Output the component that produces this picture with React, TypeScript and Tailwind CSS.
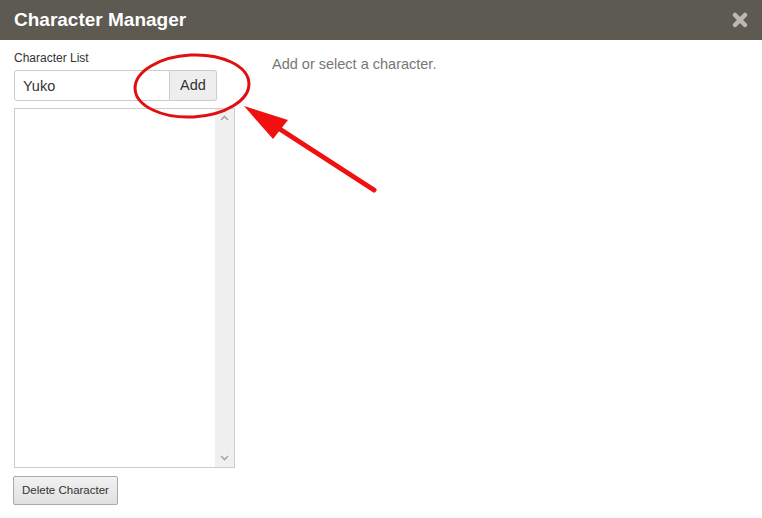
import React from "react";

const font = { fontFamily: '"Liberation Sans", Arial, sans-serif' };

const Annotation: React.FC = () => (
  <svg
    className="pointer-events-none absolute left-0 top-0"
    width="762"
    height="518"
    viewBox="0 0 762 518"
  >
    <ellipse
      cx="192"
      cy="86"
      rx="57"
      ry="31"
      fill="none"
      stroke="#e01010"
      strokeWidth="3"
      transform="rotate(-3 192 86)"
    />
    <line x1="374" y1="190" x2="272" y2="124" stroke="#f01010" strokeWidth="5" strokeLinecap="round" />
    <polygon points="244,106 288,120 273,139" fill="#f01010" />
  </svg>
);

const App: React.FC = () => {
  return (
    <div className="relative flex h-[518px] w-[762px] flex-col bg-white" style={font}>
      <div className="flex h-[40px] shrink-0 items-center justify-between bg-[#5d5a52] pl-[14px] pr-[14px]">
        <h1 className="text-[19px] font-bold text-white">Character Manager</h1>
        <svg width="16" height="16" viewBox="0 0 16 16">
          <path d="M3 3 L13 13 M13 3 L3 13" stroke="#bdb9b1" strokeWidth="4.5" strokeLinecap="round" />
        </svg>
      </div>

      <div className="flex flex-1">
        <div className="flex w-[258px] flex-col pl-[14px] pt-[11px]">
          <label className="text-[12px] leading-[14px] text-[#333]">Character List</label>
          <div className="mt-[5px] flex h-[31px] w-[203px]">
            <input
              defaultValue="Yuko"
              className="h-full w-[156px] rounded-l-[3px] border border-[#ccc] px-[8px] text-[14.5px] text-[#333] outline-none"
            />
            <button className="h-full w-[47px] rounded-r-[3px] border border-l-0 border-[#ccc] bg-[#eeeeee] text-[14.5px] text-[#333]">
              Add
            </button>
          </div>
          <div className="mt-[7px] flex h-[360px] w-[221px] border border-[#ccc]">
            <div className="flex-1" />
            <div className="flex w-[19px] flex-col items-center justify-between bg-[#f0f0f0] py-[6px]">
              <svg width="9" height="6" viewBox="0 0 9 6">
                <path d="M1 5 L4.5 1.5 L8 5" fill="none" stroke="#a8a8a8" strokeWidth="1.6" />
              </svg>
              <svg width="9" height="6" viewBox="0 0 9 6">
                <path d="M1 1 L4.5 4.5 L8 1" fill="none" stroke="#a8a8a8" strokeWidth="1.6" />
              </svg>
            </div>
          </div>
          <div className="mt-[8px] -ml-px">
            <button className="h-[29px] rounded-[2px] border border-[#a9a9a9] bg-gradient-to-b from-[#f2f2f2] to-[#e0e0e0] px-[8px] text-[11.5px] text-[#333]">
              Delete Character
            </button>
          </div>
        </div>

        <div className="pl-[14px] pt-[14px]">
          <p className="text-[14.5px] text-[#777]">Add or select a character.</p>
        </div>
      </div>

      <Annotation />
    </div>
  );
};

export default App;
